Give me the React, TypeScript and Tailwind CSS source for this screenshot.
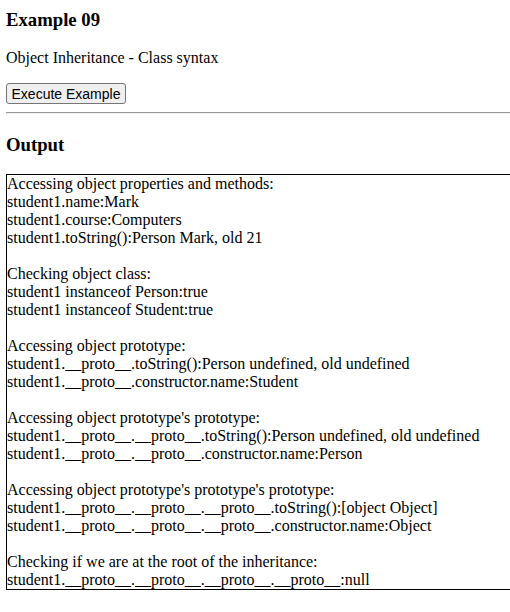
import React from "react";

const sections: string[][] = [
  [
    "Accessing object properties and methods:",
    "student1.name:Mark",
    "student1.course:Computers",
    "student1.toString():Person Mark, old 21",
  ],
  [
    "Checking object class:",
    "student1 instanceof Person:true",
    "student1 instanceof Student:true",
  ],
  [
    "Accessing object prototype:",
    "student1.__proto__.toString():Person undefined, old undefined",
    "student1.__proto__.constructor.name:Student",
  ],
  [
    "Accessing object prototype's prototype:",
    "student1.__proto__.__proto__.toString():Person undefined, old undefined",
    "student1.__proto__.__proto__.constructor.name:Person",
  ],
  [
    "Accessing object prototype's prototype's prototype:",
    "student1.__proto__.__proto__.__proto__.toString():[object Object]",
    "student1.__proto__.__proto__.__proto__.constructor.name:Object",
  ],
  [
    "Checking if we are at the root of the inheritance:",
    "student1.__proto__.__proto__.__proto__.__proto__:null",
  ],
];

export default function App() {
  return (
    <div className="w-[510px] h-[612px] overflow-hidden bg-white text-black font-['Liberation_Serif','Times_New_Roman',serif]">
      <div className="flex flex-col pl-[6px] w-[530px]">
        <h3 className="mt-[9px] h-[22px] text-[18.72px] leading-[22px] font-bold">Example 09</h3>
        <p className="mt-[18px] h-[18px] text-[16px] leading-[18px]">Object Inheritance - Class syntax</p>
        <div className="mt-[16px] h-[21px] flex items-start">
          <button className="flex items-center justify-center h-[21px] w-[120px] rounded-[3px] border border-[#767676] bg-[#efefef] text-[14px] leading-[16px] font-['Liberation_Sans',Arial,sans-serif]">
            Execute Example
          </button>
        </div>
        <div className="mt-[8px] flex flex-col">
          <div className="h-px bg-[#9a9a9a]" />
          <div className="h-px bg-[#eeeeee]" />
        </div>
        <h3 className="mt-[20px] h-[22px] text-[18.72px] leading-[22px] font-bold">Output</h3>
        <div className="mt-[18px] border border-black text-[16px] leading-[18px]">
          {sections.map((sec, i) => (
            <div key={i}>
              {i > 0 && <div className="h-[18px]" />}
              {sec.map((line, j) => (
                <div key={j} className="whitespace-pre">{line}</div>
              ))}
            </div>
          ))}
        </div>
      </div>
    </div>
  );
}
